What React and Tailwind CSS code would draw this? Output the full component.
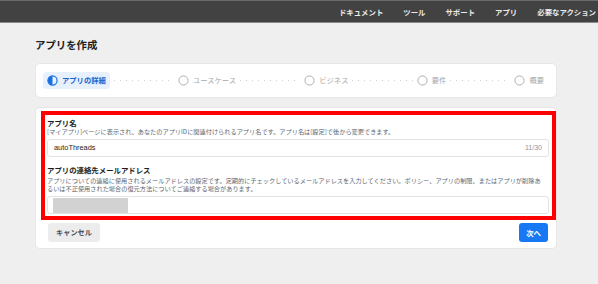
import { Fragment } from 'react'

const FONT = { fontFamily: '"Noto Sans CJK JP", "Liberation Sans", sans-serif' }

const NAV = ['ドキュメント', 'ツール', 'サポート', 'アプリ', '必要なアクション']
const STEPS = ['ユースケース', 'ビジネス', '要件', '概要']

function Dots() {
  return (
    <div className="flex-1 h-px mx-[4px] bg-[linear-gradient(to_right,#cfcfcf_1px,transparent_1px)] bg-[length:6px_1px]" />
  )
}

function HalfCircle() {
  return (
    <svg width="11" height="11" viewBox="0 0 12 12" className="shrink-0">
      <circle cx="6" cy="6" r="5" fill="none" stroke="#1b6fe0" strokeWidth="1.3" />
      <path d="M6 1 A5 5 0 0 0 6 11 Z" fill="#1b6fe0" />
    </svg>
  )
}

function EmptyCircle() {
  return (
    <svg width="11" height="11" viewBox="0 0 12 12" className="shrink-0">
      <circle cx="6" cy="6" r="5" fill="none" stroke="#a8a8a8" strokeWidth="1" />
    </svg>
  )
}

export default function App() {
  return (
    <div className="w-[598px] h-[284px] bg-[#efefef] overflow-hidden" style={FONT}>
      {/* top bar */}
      <div className="h-[23px] bg-[#424242] border-t border-[#6b6b6b] border-b border-b-[#8a8a8a] flex items-center justify-end gap-[20px] pr-[2px]">
        {NAV.map(n => (
          <span key={n} className="text-[7.4px] font-bold text-[#ececec] leading-none">{n}</span>
        ))}
      </div>

      <div className="pl-[35px] pr-[41px]">
        <h1 className="mt-[15px] text-[10.4px] leading-[14px] font-bold text-[#1c1e21]">アプリを作成</h1>

        {/* stepper */}
        <div className="mt-[11px] h-[35px] bg-white rounded-[5px] border border-[#e6e6e6] flex items-center pl-[7px] pr-[12px]">
          <div className="flex items-center gap-[4px] h-[17px] px-[4px] rounded-[4px] bg-[#e7f0fd]">
            <HalfCircle />
            <span className="text-[7.3px] font-bold text-[#1b63cf] leading-none">アプリの詳細</span>
          </div>
          {STEPS.map(s => (
            <Fragment key={s}>
              <Dots />
              <div className="flex items-center gap-[4px]">
                <EmptyCircle />
                <span className="text-[7.3px] text-[#a8a8a8] leading-none">{s}</span>
              </div>
            </Fragment>
          ))}
        </div>

        {/* form card */}
        <div className="mt-[9px] bg-white rounded-[5px] border border-[#e6e6e6] pt-[3px] pl-[5px] pr-0 pb-[6px]">
          <div className="border-[4px] border-[#ff0000] pl-[2px] pr-[3px] pt-[3px] pb-[2px]">
            <div className="text-[7.4px] leading-[10px] font-bold text-[#1c1e21]">アプリ名</div>
            <div className="text-[6.2px] leading-[7px] text-[#606770] whitespace-nowrap">
              [マイアプリ]ページに表示され、あなたのアプリIDに関連付けられるアプリ名です。アプリ名は[設定]で後から変更できます。
            </div>
            <div className="mt-[4px] h-[18px] rounded-[3px] border border-[#e3e3e3] flex items-center justify-between px-[6px]">
              <span className="text-[7.4px] text-[#1c1e21]" style={{ fontFamily: '"Liberation Sans", sans-serif' }}>autoThreads</span>
              <span className="text-[7px] text-[#8d949e]" style={{ fontFamily: '"Liberation Sans", sans-serif' }}>11/30</span>
            </div>

            <div className="mt-[8px] text-[7.4px] leading-[10px] font-bold text-[#1c1e21]">アプリの連絡先メールアドレス</div>
            <div className="mt-[2px] text-[6.2px] leading-[8px] text-[#606770] whitespace-nowrap">
              アプリについての連絡に使用されるメールアドレスの設定です。定期的にチェックしているメールアドレスを入力してください。ポリシー、アプリの制限、またはアプリが削除あ
              <br />
              るいは不正使用された場合の復元方法についてご連絡する場合があります。
            </div>
            <div className="mt-[3px] h-[18px] rounded-[3px] border border-[#e3e3e3] flex items-center px-[5px]">
              <div className="w-[75px] h-[15px] bg-[#d2d2d2]" />
            </div>
          </div>

          <div className="mt-[3px] flex items-center justify-between pl-[7px] pr-[8px]">
            <button className="h-[19px] px-[8px] rounded-[3px] bg-[#ececec] text-[7.2px] font-bold text-[#4b4f56]">キャンセル</button>
            <button className="h-[19px] px-[7px] rounded-[3px] bg-[#1877f2] text-[7.4px] font-bold text-white">次へ</button>
          </div>
        </div>
      </div>
    </div>
  )
}
